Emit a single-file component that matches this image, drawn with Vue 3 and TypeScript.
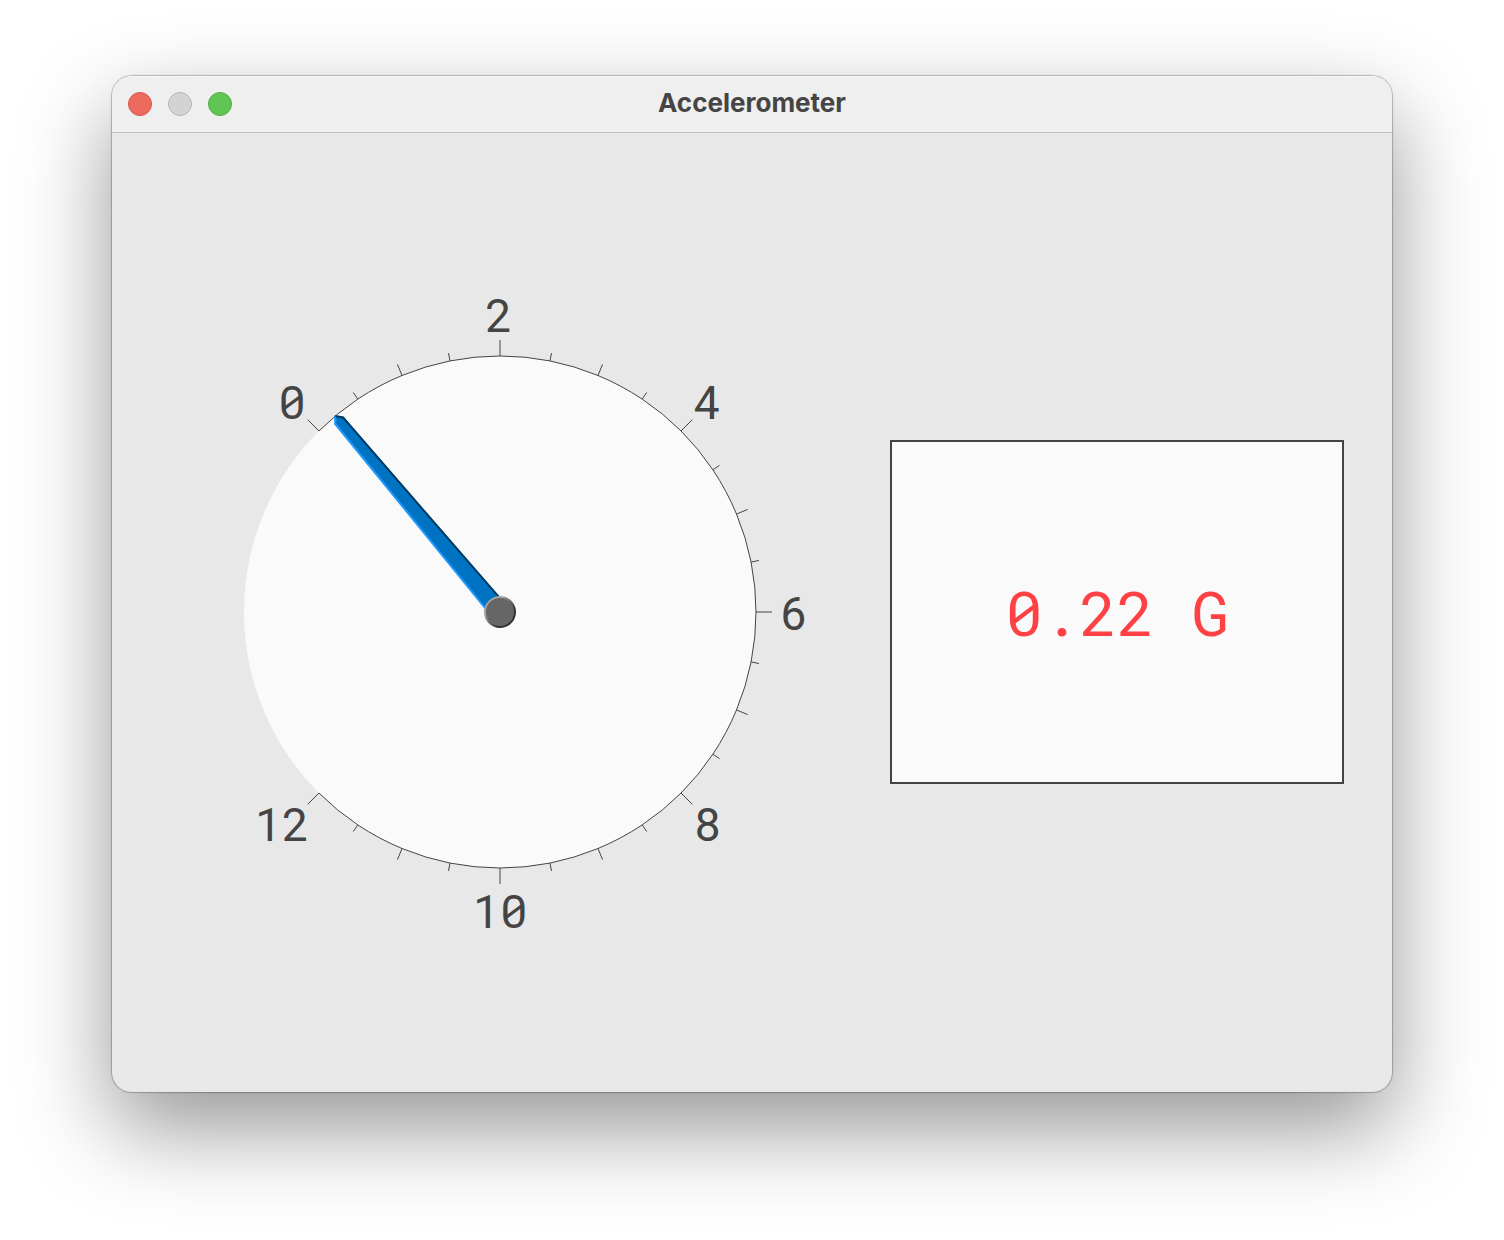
<script setup lang="ts">
import { computed, ref } from 'vue'

interface Tick { x1: number; y1: number; x2: number; y2: number }
interface Label { text: string; x: number; y: number }

const reading = ref(0.22)
const min = 0
const max = 12
const cx = 388
const cy = 480
const radius = 256

// Degrees clockwise from twelve o'clock; the scale sweeps 270 degrees.
const angleOf = (value: number) => -45 + ((value - min) / (max - min)) * 270

function polar(value: number, r: number) {
  const a = (angleOf(value) * Math.PI) / 180
  return { x: cx + r * Math.sin(a), y: cy - r * Math.cos(a) }
}

const ticks: Tick[] = Array.from({ length: 25 }, (_, i) => {
  const length = i % 4 === 0 ? 16 : i % 2 === 0 ? 12 : 8
  const a = polar(i / 2, radius)
  const b = polar(i / 2, radius + length)
  return { x1: a.x, y1: a.y, x2: b.x, y2: b.y }
})

const labels: Label[] = [
  { text: '0', x: 180, y: 287 },
  { text: '2', x: 387, y: 200 },
  { text: '4', x: 595, y: 287 },
  { text: '6', x: 682, y: 498 },
  { text: '8', x: 595, y: 709 },
  { text: '10', x: 388, y: 796 },
  { text: '12', x: 170, y: 709 },
]

const start = polar(min, radius)
const end = polar(max, radius)
const arc = `M${start.x} ${start.y}A${radius} ${radius} 0 1 1 ${end.x} ${end.y}`

const needleTurn = computed(() => `translate(${cx} ${cy}) rotate(${angleOf(reading.value)})`)
</script>

<template>
  <main class="desktop">
    <section class="window" aria-labelledby="window-title">
      <header class="titlebar">
        <div class="controls">
          <button class="dot close" type="button" aria-label="Close"></button>
          <button class="dot minimise" type="button" aria-label="Minimise" disabled></button>
          <button class="dot zoom" type="button" aria-label="Zoom"></button>
        </div>
        <h1 id="window-title" class="title">Accelerometer</h1>
      </header>
      <div class="content">
        <svg class="dial" viewBox="0 0 776 960" role="img" aria-label="Acceleration dial">
          <defs>
            <linearGradient id="rim" x1="0" y1="0" x2="1" y2="1">
              <stop offset="0.3" stop-color="#a3a3a3" />
              <stop offset="0.7" stop-color="#333333" />
            </linearGradient>
          </defs>
          <circle :cx="cx" :cy="cy" :r="radius" fill="#fafafa" />
          <path class="scale" :d="arc" />
          <line v-for="(t, i) in ticks" :key="i" class="scale" :x1="t.x1" :y1="t.y1" :x2="t.x2" :y2="t.y2" />
          <text v-for="l in labels" :key="l.text" class="label" :x="l.x" :y="l.y">{{ l.text }}</text>
          <g :transform="needleTurn">
            <path fill="#0072c2" d="M-9 0L-6 -250L0 -257L6 -250L9 0Z" />
            <path fill="none" stroke="#1e9bff" stroke-width="2" d="M-9 0L-5 -250L0 -256" />
            <path fill="none" stroke="#003a61" stroke-width="2" d="M0 -256L5 -250L9 0" />
          </g>
          <circle :cx="cx" :cy="cy" r="15" fill="#666666" stroke="url(#rim)" stroke-width="2" />
        </svg>
        <div class="side">
          <output class="readout">{{ reading.toFixed(2) }} G</output>
        </div>
      </div>
    </section>
  </main>
</template>

<style>
body {
  margin: 0;
  background: #ffffff;
}
</style>

<style scoped>
.desktop {
  box-sizing: border-box;
  min-height: 100vh;
  padding: 76px 112px 148px;
  overflow: hidden;
}
.window {
  border-radius: 20px;
  background: #e8e8e8;
  overflow: hidden;
  box-shadow: 0 0 0 1px rgba(0, 0, 0, 0.18), 0 0 3px rgba(0, 0, 0, 0.15), 0 36px 90px rgba(0, 0, 0, 0.42);
}
.titlebar {
  box-sizing: border-box;
  display: grid;
  grid-template-columns: 1fr auto 1fr;
  align-items: center;
  height: 56px;
  padding: 0 16px;
  background: #efefef;
  box-shadow: inset 0 1px 0 #f8f8f8, 0 1px 0 #bfbfbf;
}
.controls {
  display: flex;
  gap: 16px;
}
.dot {
  box-sizing: border-box;
  width: 24px;
  height: 24px;
  padding: 0;
  border: 1px solid;
  border-radius: 50%;
}
.close {
  background: #ed6a5e;
  border-color: #d65347;
}
.minimise {
  background: #d3d3d3;
  border-color: #b5b5b5;
}
.zoom {
  background: #61c554;
  border-color: #50ac45;
}
.title {
  margin: 0;
  padding-bottom: 2px;
  font: 700 26px/32px Inter, sans-serif;
  color: #454545;
}
.content {
  display: grid;
  grid-template-columns: 776fr 504fr;
  align-items: center;
}
.dial {
  display: block;
  width: 100%;
}
.scale {
  fill: none;
  stroke: #444444;
  stroke-width: 1px;
}
.label {
  font: 450 46px "Roboto Mono", "DejaVu Sans Mono", monospace;
  fill: #444444;
  text-anchor: middle;
}
.side {
  padding: 0 48px 0 2px;
}
.readout {
  box-sizing: border-box;
  display: flex;
  align-items: center;
  justify-content: center;
  height: 344px;
  border: 2px solid #444444;
  background: #fafafa;
  color: #fd4144;
  font: 450 62px/80px "Roboto Mono", "DejaVu Sans Mono", monospace;
  white-space: pre;
}
</style>
